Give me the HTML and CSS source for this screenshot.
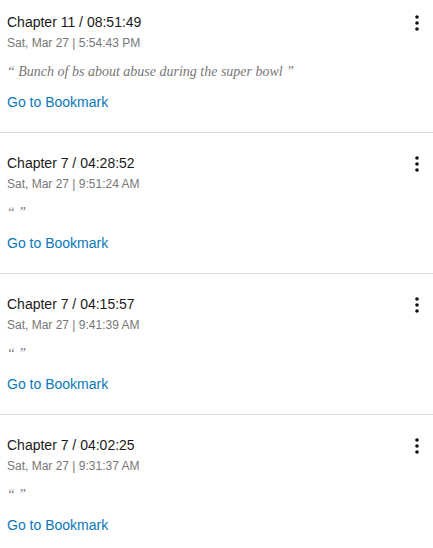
FILE: index.html
```html
<!DOCTYPE html>
<html lang="en">
<head>
  <meta charset="UTF-8">
  <meta name="viewport" content="width=device-width, initial-scale=1.0">
  <title>Bookmarks</title>
  <link rel="stylesheet" href="styles.css">
</head>
<body>
  <ul class="bookmarks">
    <li class="bookmark">
      <div class="bookmark-head">
        <div>
          <div class="bookmark-title">Chapter 11 / 08:51:49</div>
          <div class="bookmark-date">Sat, Mar 27 | 5:54:43 PM</div>
        </div>
        <button class="menu-btn" aria-label="More">
          <svg width="4" height="16" viewBox="0 0 4 16"><circle cx="2" cy="2" r="1.8"/><circle cx="2" cy="8" r="1.8"/><circle cx="2" cy="14" r="1.8"/></svg>
        </button>
      </div>
      <p class="bookmark-note">“ Bunch of bs about abuse during the super bowl ”</p>
      <a class="bookmark-link" href="#">Go to Bookmark</a>
    </li>
    <li class="bookmark">
      <div class="bookmark-head">
        <div>
          <div class="bookmark-title">Chapter 7 / 04:28:52</div>
          <div class="bookmark-date">Sat, Mar 27 | 9:51:24 AM</div>
        </div>
        <button class="menu-btn" aria-label="More">
          <svg width="4" height="16" viewBox="0 0 4 16"><circle cx="2" cy="2" r="1.8"/><circle cx="2" cy="8" r="1.8"/><circle cx="2" cy="14" r="1.8"/></svg>
        </button>
      </div>
      <p class="bookmark-note">“ ”</p>
      <a class="bookmark-link" href="#">Go to Bookmark</a>
    </li>
    <li class="bookmark">
      <div class="bookmark-head">
        <div>
          <div class="bookmark-title">Chapter 7 / 04:15:57</div>
          <div class="bookmark-date">Sat, Mar 27 | 9:41:39 AM</div>
        </div>
        <button class="menu-btn" aria-label="More">
          <svg width="4" height="16" viewBox="0 0 4 16"><circle cx="2" cy="2" r="1.8"/><circle cx="2" cy="8" r="1.8"/><circle cx="2" cy="14" r="1.8"/></svg>
        </button>
      </div>
      <p class="bookmark-note">“ ”</p>
      <a class="bookmark-link" href="#">Go to Bookmark</a>
    </li>
    <li class="bookmark">
      <div class="bookmark-head">
        <div>
          <div class="bookmark-title">Chapter 7 / 04:02:25</div>
          <div class="bookmark-date">Sat, Mar 27 | 9:31:37 AM</div>
        </div>
        <button class="menu-btn" aria-label="More">
          <svg width="4" height="16" viewBox="0 0 4 16"><circle cx="2" cy="2" r="1.8"/><circle cx="2" cy="8" r="1.8"/><circle cx="2" cy="14" r="1.8"/></svg>
        </button>
      </div>
      <p class="bookmark-note">“ ”</p>
      <a class="bookmark-link" href="#">Go to Bookmark</a>
    </li>
  </ul>
</body>
</html>
```

FILE: styles.css
```css
body {
  margin: 0;
  font-family: "Liberation Sans", Arial, sans-serif;
  background: #fff;
  color: #222;
}

.bookmarks {
  list-style: none;
  margin: 0;
  padding: 0;
}

.bookmark {
  padding: 22px 14px 21px 7px;
  border-bottom: 1px solid #dcdcdc;
}

.bookmark:first-child {
  padding-top: 14px;
}

.bookmark-head {
  display: flex;
  justify-content: space-between;
  align-items: flex-start;
}

.bookmark-title {
  font-size: 14px;
  line-height: 16px;
  color: #1a1a1a;
}

.bookmark-date {
  margin-top: 6px;
  font-size: 12px;
  line-height: 14px;
  color: #777;
}

.menu-btn {
  border: none;
  background: none;
  padding: 0;
  margin-top: 1px;
  line-height: 0;
  cursor: pointer;
}

.menu-btn svg {
  fill: #111;
}

.bookmark-note {
  margin: 13px 0 0;
  font-family: "Liberation Serif", "Times New Roman", serif;
  font-style: italic;
  font-size: 14px;
  line-height: 18px;
  color: #777;
  min-height: 18px;
}

.bookmark-link {
  display: inline-block;
  margin-top: 13px;
  font-size: 14px;
  line-height: 16px;
  color: #0a78b8;
  text-decoration: none;
}
```
